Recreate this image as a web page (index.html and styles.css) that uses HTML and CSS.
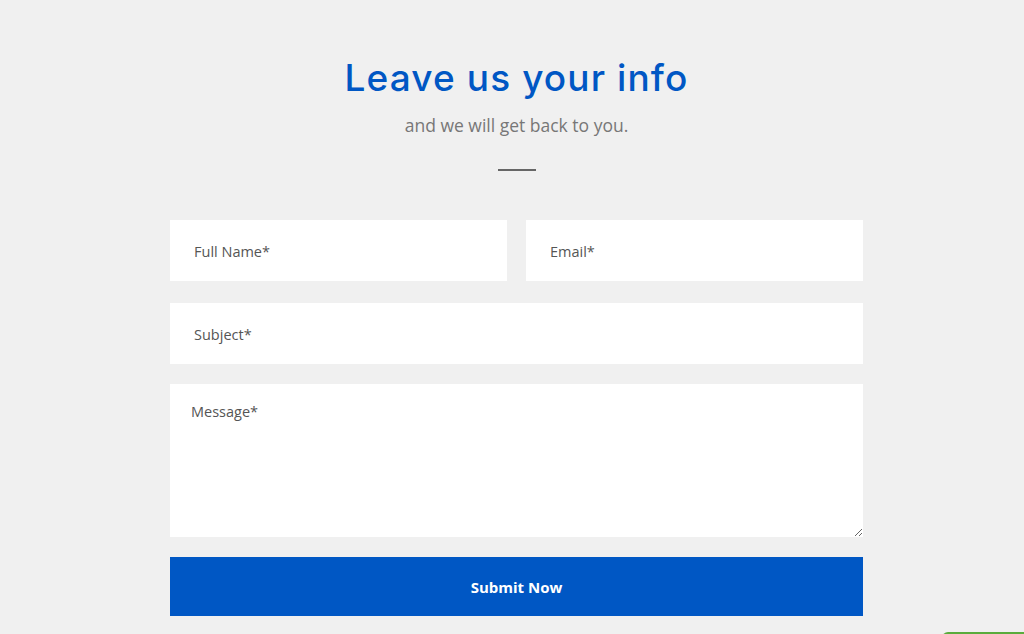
FILE: index.html
```html
<!DOCTYPE html>
<html lang="en">

<head>
    <meta charset="UTF-8">
    <meta name="viewport" content="width=device-width, initial-scale=1.0">
    <title>Contact</title>
    <link rel="stylesheet" href="styles.css">
</head>

<body>
    <section class="contact">
        <h1>Leave us your info</h1>
        <p class="lead">and we will get back to you.</p>
        <div class="divider"></div>

        <form class="contact-form">
            <div class="row two">
                <input type="text" placeholder="Full Name*">
                <input type="email" placeholder="Email*">
            </div>
            <div class="row">
                <input type="text" placeholder="Subject*">
            </div>
            <div class="row">
                <textarea placeholder="Message*"></textarea>
            </div>
            <button type="button">Submit Now</button>
        </form>
    </section>

    <div class="chat-tab"></div>
</body>

</html>
```

FILE: styles.css
```css
body {
    margin: 0;
    padding-left: 9px;
    background-color: #f0f0f0;
    font-family: "Open Sans", sans-serif;
    color: #555;
    height: 634px;
    overflow: hidden;
}

.contact {
    width: 693px;
    margin: 0 auto;
    padding-top: 54px;
    text-align: center;
}

h1 {
    margin: 0;
    font-family: "Inter", "Open Sans", sans-serif;
    font-weight: 500;
    font-size: 37px;
    line-height: 48px;
    color: #0057c4;
    letter-spacing: 1.1px;
}

.lead {
    margin: 11px 0 0;
    font-size: 17.5px;
    line-height: 24px;
    color: #777;
}

.divider {
    width: 38px;
    height: 2px;
    background-color: #666;
    margin: 32px auto 0;
}

.contact-form {
    margin-top: 49px;
    text-align: left;
}

.row {
    display: flex;
    gap: 19px;
    margin-bottom: 20px;
}

.row.two {
    margin-bottom: 22px;
}

.row input,
.row textarea {
    flex: 1;
    min-width: 0;
    box-sizing: border-box;
    border: none;
    background-color: #fff;
    font-family: "Open Sans", sans-serif;
    font-size: 14.5px;
    color: #555;
    outline: none;
}

.row input {
    height: 61px;
    padding: 2px 24px 0;
}

.row textarea {
    height: 153px;
    padding: 18px 21px;
    resize: vertical;
}

.row input::placeholder,
.row textarea::placeholder {
    color: #555;
}

.contact-form button {
    display: block;
    width: 100%;
    height: 59px;
    border: none;
    background-color: #0057c4;
    color: #fff;
    font-family: "Open Sans", sans-serif;
    font-weight: 700;
    font-size: 15px;
    cursor: pointer;
}

.chat-tab {
    position: absolute;
    right: 0;
    top: 632px;
    width: 82px;
    height: 20px;
    background-color: #5aac3c;
    border-radius: 6px 0 0 0;
}
```
